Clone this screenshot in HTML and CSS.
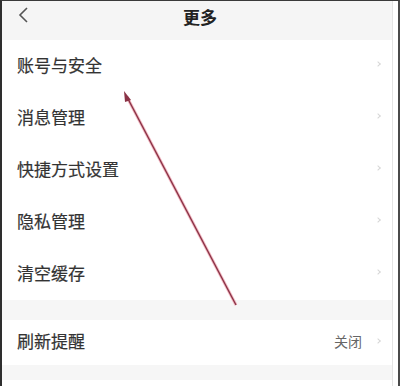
FILE: index.html
```html
<!DOCTYPE html>
<html lang="zh">
<head>
<meta charset="utf-8">
<link rel="stylesheet" href="styles.css">
</head>
<body>
<div class="frame">
  <div class="screen">
    <header class="topbar">
      <svg class="back" width="12" height="18" viewBox="0 0 12 18"><path d="M10 2 L3 9 L10 16" fill="none" stroke="#555" stroke-width="1.6"/></svg>
      <div class="title">更多</div>
    </header>
    <ul class="group">
      <li class="row"><span class="label">账号与安全</span><span class="chev"></span></li>
      <li class="row"><span class="label">消息管理</span><span class="chev"></span></li>
      <li class="row"><span class="label">快捷方式设置</span><span class="chev"></span></li>
      <li class="row"><span class="label">隐私管理</span><span class="chev"></span></li>
      <li class="row"><span class="label">清空缓存</span><span class="chev"></span></li>
    </ul>
    <div class="gap"></div>
    <ul class="group">
      <li class="row short"><span class="label">刷新提醒</span><span class="value">关闭</span><span class="chev"></span></li>
    </ul>
    <div class="gap small"></div>
    <div class="rest"></div>
    <svg class="arrow" width="400" height="386" viewBox="0 0 400 386">
      <line x1="236" y1="305" x2="127" y2="97" stroke="#f2b8c2" stroke-width="3"/>
      <line x1="236" y1="305" x2="127" y2="97" stroke="#8a3346" stroke-width="1.4"/>
      <path d="M124 91 L131 100 L125 102 Z" fill="#8a3346"/>
    </svg>
  </div>
</div>
</body>
</html>
```

FILE: styles.css
```css
html, body {
  margin: 0;
  padding: 0;
  background: #fff;
}
body {
  font-family: "Noto Sans CJK SC", "Noto Sans", sans-serif;
  width: 400px;
  height: 386px;
  overflow: hidden;
}
.frame {
  box-sizing: border-box;
  width: 400px;
  height: 386px;
  border-left: 2px solid #2e2e2e;
  border-top: 1px solid #3a3a3a;
  border-right: 2px solid #4a4a4a;
  background: #fff;
}
.screen {
  position: relative;
  width: 390px;
  height: 100%;
  border-right: 1px solid #e4e4e4;
  background: #fff;
}
.topbar {
  height: 39px;
  background: #f5f5f5;
  display: flex;
  align-items: center;
  justify-content: center;
  position: relative;
}
.back {
  position: absolute;
  left: 15px;
  top: 5px;
}
.title {
  font-size: 17px;
  font-weight: 700;
  color: #222;
  margin-top: -9px;
  margin-left: 6px;
}
.group {
  list-style: none;
  margin: 0;
  padding: 0;
  background: #fff;
}
.row {
  height: 52px;
  display: flex;
  align-items: center;
  padding: 0 8px 0 15px;
}
.row.short {
  height: 45px;
}
.label {
  flex: 1;
  font-size: 17px;
  color: #333;
  margin-top: -4px;
  -webkit-text-stroke: 0.2px #333;
}
.value {
  font-size: 14px;
  color: #666;
  margin-right: 14px;
  margin-top: -3px;
}
.chev {
  width: 3px;
  height: 3px;
  border-top: 1.5px solid #d6d6d6;
  border-right: 1.5px solid #d6d6d6;
  transform: rotate(45deg);
  margin-right: 4px;
  margin-top: -4px;
}
.gap {
  height: 20px;
  background: #f6f6f6;
}
.gap.small {
  height: 15px;
}
.rest {
  height: 20px;
  background: #fff;
}
.arrow {
  position: absolute;
  left: -2px;
  top: -1px;
  pointer-events: none;
}
```
